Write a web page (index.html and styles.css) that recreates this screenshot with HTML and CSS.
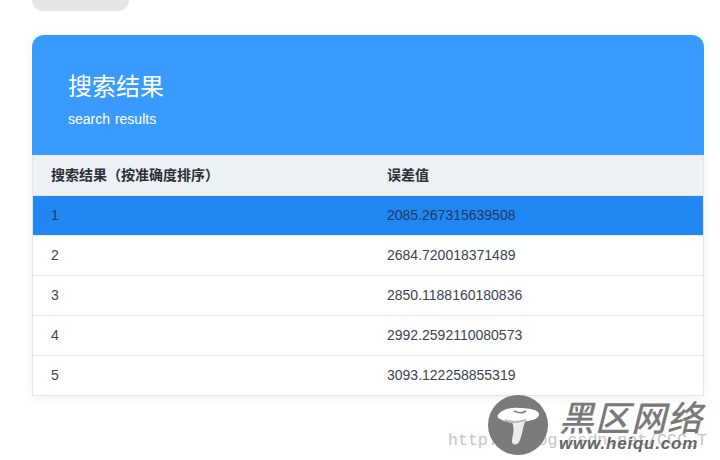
FILE: index.html
```html
<!DOCTYPE html>
<html lang="zh">
<head>
<meta charset="utf-8">
<title>搜索结果</title>
<link rel="stylesheet" href="styles.css">
</head>
<body>
<main class="page">
  <div class="stub"></div>
  <section class="card">
    <header class="hero">
      <h1>搜索结果</h1>
      <p>search results</p>
    </header>
    <table class="results">
      <thead>
        <tr><th>搜索结果（按准确度排序）</th><th>误差值</th></tr>
      </thead>
      <tbody>
        <tr class="active"><td>1</td><td>2085.267315639508</td></tr>
        <tr><td>2</td><td>2684.720018371489</td></tr>
        <tr><td>3</td><td>2850.1188160180836</td></tr>
        <tr><td>4</td><td>2992.2592110080573</td></tr>
        <tr><td>5</td><td>3093.122258855319</td></tr>
      </tbody>
    </table>
  </section>
</main>
<div class="url-mark">http://blog.csdn.net/CCC_T</div>
<div class="mark">
  <svg class="mark-logo" width="60" height="60" viewBox="0 0 60 60">
    <circle cx="30" cy="30" r="30" fill="#7b7b7b"/>
    <path d="M24 27L37 26C35 33 34 39 32 45C30 51 23 51 24 45C25 39 27 34 24 27Z" fill="#ececec"/>
    <path d="M10 20C13 15 22 12 31 13C41 13 51 15 51 19C51 23 46 25 40 26C33 28 25 29 20 27C13 25 8 23 10 20Z" fill="#fff"/>
    <path d="M26 16C30 18 35 18 38 16" stroke="#7b7b7b" stroke-width="1.6" fill="none"/>
    <path d="M17 25C23 28 31 27 38 25" stroke="#b9b9b9" stroke-width="2" fill="none"/>
  </svg>
  <div class="mark-text">
    <div class="mark-cn">黑区网络</div>
    <div class="mark-en">www.heiqu.com</div>
  </div>
</div>
</body>
</html>
```
FILE: styles.css
```css
* { box-sizing: border-box; }
html, body { margin: 0; padding: 0; height: 460px; overflow: hidden; background: #fff; }
body { position: relative; font-family: "Liberation Sans", "Noto Sans CJK SC", sans-serif; color: #2c3e50; }
.page { padding: 0 16px 0 32px; }
.stub { width: 97px; height: 11px; background: #e6e6e6; border-radius: 0 0 12px 12px; margin-bottom: 24px; }
.card { width: 672px; border-radius: 12px 12px 0 0; overflow: hidden; box-shadow: 0 2px 12px rgba(0,0,0,.06); }
.hero { height: 120px; background: #3a9bff; color: #fff; padding: 36px 36px 0; }
.hero h1 { margin: 0; font-size: 24px; line-height: 32px; font-weight: 400; }
.hero p { margin: 6px 0 0; font-size: 14px; line-height: 20px; word-spacing: 1px; }
.results { width: 100%; border-collapse: separate; border-spacing: 0; table-layout: fixed; font-size: 14px; border-left: 1px solid #dfe6ee; border-right: 1px solid #dfe6ee; }
.results th, .results td { height: 40px; padding: 0 18px 2px; text-align: left; border-bottom: 1px solid #e1e4e8; }
.results th:first-child, .results td:first-child { width: 336px; }
.results th { height: 41px; font-size: 14px; font-weight: 700; color: #2b2f36; background: #edf0f5; border-bottom-color: #dfe6ee; }
.results td { color: #3b4350; }
.results .active td { background: #2188f3; color: #1f3a63; border-bottom-color: #e6edf5; }
.results tr:last-child td { border-bottom-color: #dfe6ee; }
.url-mark { position: absolute; left: 448px; top: 431px; font-family: "Liberation Mono", monospace; font-size: 16.6px; line-height: 20px; color: #c4c4c4; white-space: nowrap; }
.mark { position: absolute; left: 488px; top: 395px; display: flex; align-items: flex-start; gap: 13px; }
.mark-logo { display: block; flex: none; }
.mark-text { padding-top: 3px; }
.mark-cn { font-size: 35px; line-height: 36px; font-style: italic; color: #7a7a7a; letter-spacing: 1px; white-space: nowrap; font-family: "Noto Sans CJK SC", sans-serif; font-weight: 500; margin-left: -2px; }
.mark-en { font-size: 17px; line-height: 20px; font-style: italic; font-weight: 700; color: #666; white-space: nowrap; letter-spacing: .8px; margin-left: -2px; }
```
